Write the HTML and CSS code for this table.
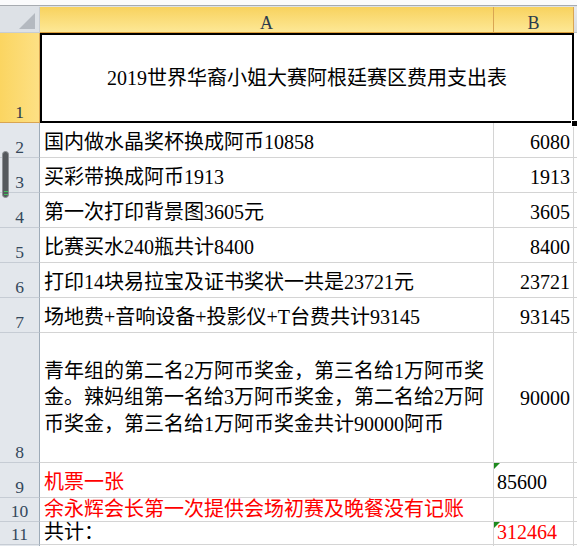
FILE: index.html
```html
<!DOCTYPE html>
<html lang="zh">
<head>
<meta charset="utf-8">
<title>2019世界华裔小姐大赛阿根廷赛区费用支出表</title>
<link rel="stylesheet" href="styles.css">
</head>
<body>
<div class="topstrip"></div>
<div class="sheet">
  <div class="corner"><span class="corner-tri"></span></div>
  <div class="colhdr sel">A</div>
  <div class="colhdr sel">B</div>
  <div class="colhdr plain"></div>

  <div class="rowhdr sel">1</div>
  <div class="cell merged"><span>2019世界华裔小姐大赛阿根廷赛区费用支出表</span><span class="handle"></span></div>
  <div class="cell rest"></div>

  <div class="rowhdr">2</div>
  <div class="cell">国内做水晶奖杯换成阿币10858</div>
  <div class="cell num">6080</div>
  <div class="cell rest"></div>

  <div class="rowhdr">3</div>
  <div class="cell">买彩带换成阿币1913</div>
  <div class="cell num">1913</div>
  <div class="cell rest"></div>

  <div class="rowhdr">4</div>
  <div class="cell">第一次打印背景图3605元</div>
  <div class="cell num">3605</div>
  <div class="cell rest"></div>

  <div class="rowhdr">5</div>
  <div class="cell">比赛买水240瓶共计8400</div>
  <div class="cell num">8400</div>
  <div class="cell rest"></div>

  <div class="rowhdr">6</div>
  <div class="cell">打印14块易拉宝及证书奖状一共是23721元</div>
  <div class="cell num">23721</div>
  <div class="cell rest"></div>

  <div class="rowhdr">7</div>
  <div class="cell">场地费+音响设备+投影仪+T台费共计93145</div>
  <div class="cell num">93145</div>
  <div class="cell rest"></div>

  <div class="rowhdr">8</div>
  <div class="cell wrap">青年组的第二名2万阿币奖金，第三名给1万阿币奖<br>金。辣妈组第一名给3万阿币奖金，第二名给2万阿<br>币奖金，第三名给1万阿币奖金共计90000阿币</div>
  <div class="cell num mid">90000</div>
  <div class="cell rest"></div>

  <div class="rowhdr">9</div>
  <div class="cell red">机票一张</div>
  <div class="cell txt"><span class="tri"></span>85600</div>
  <div class="cell rest"></div>

  <div class="rowhdr">10</div>
  <div class="cell red tight">余永辉会长第一次提供会场初赛及晚餐没有记账</div>
  <div class="cell tight"></div>
  <div class="cell rest"></div>

  <div class="rowhdr">11</div>
  <div class="cell tight">共计：</div>
  <div class="cell txt red tight"><span class="tri"></span>312464</div>
  <div class="cell rest"></div>

  <div class="rowhdr"></div>
  <div class="cell"></div>
  <div class="cell"></div>
  <div class="cell rest"></div>
</div>
<div class="scrollmark"><span class="grip"></span><span class="grip"></span></div>
</body>
</html>
```

FILE: styles.css
```css
html, body {
  margin: 0;
  padding: 0;
  background: #ffffff;
  overflow: hidden;
  height: 546px;
}

body {
  position: relative;
  font-family: "Liberation Serif", "Noto Sans CJK SC", serif;
  color: #000;
}

.topstrip {
  height: 7px;
  background: linear-gradient(#fbfbfc 0 5px, #a7abb0 5px 6px, #dfe2e6 6px 7px);
}

.sheet {
  display: grid;
  grid-template-columns: 40px 454px 80px 1fr;
  grid-template-rows: 26px 90px repeat(6, 35px) 130px 35px 24px 23px 1fr;
  height: 539px;
  overflow: hidden;
}

.sheet > div {
  box-sizing: border-box;
  min-width: 0;
}

.corner {
  position: relative;
  background: #dde1e6;
  border-right: 1px solid #c8cdd3;
  border-bottom: 1px solid #c8cdd3;
}

.corner-tri {
  position: absolute;
  right: 4px;
  bottom: 3px;
  width: 0;
  height: 0;
  border-left: 16px solid transparent;
  border-bottom: 16px solid #b4b9c0;
}

.colhdr {
  display: flex;
  align-items: flex-end;
  justify-content: center;
  font-size: 18px;
  line-height: 18px;
  color: #2b3b4c;
  border-right: 1px solid #d9a552;
  border-bottom: 1px solid #dc9f3a;
}

.colhdr.sel {
  background: linear-gradient(#f8d25e, #fde896);
}

.colhdr.plain {
  background: linear-gradient(#e6e9ed, #d9dde2);
  border-right: none;
  border-bottom: 1px solid #b9c0c8;
}

.rowhdr {
  display: flex;
  align-items: flex-end;
  justify-content: center;
  font-size: 17.5px;
  line-height: 20px;
  color: #34475b;
  background: #e3e7ec;
  border-right: 1px solid #9eabb8;
  border-bottom: 1px solid #c6ccd4;
}

.rowhdr.sel {
  background: linear-gradient(90deg, #fbd561, #fde084);
  border-right: 1px solid #d9a552;
  border-bottom: 1px solid #d9a552;
  color: #2b3b4c;
}

.cell {
  display: flex;
  align-items: flex-end;
  font-size: 20px;
  line-height: 24px;
  padding: 0 3px 3px 4px;
  white-space: nowrap;
  border-right: 1px solid #d4d4d4;
  border-bottom: 1px solid #d4d4d4;
  position: relative;
}

.cell.rest {
  border-right: none;
  padding: 0;
}

.cell.num {
  justify-content: flex-end;
}

.cell.mid {
  align-items: center;
  padding-bottom: 0;
}

.cell.txt {
  padding-left: 3px;
}

.cell.tight {
  padding-bottom: 0;
}

.cell.red {
  color: #ff0000;
}

.cell.wrap {
  align-items: center;
  line-height: 26.5px;
  padding-bottom: 0;
}

.cell.merged {
  grid-column: 2 / 4;
  justify-content: center;
  align-items: center;
  padding: 0;
  border: none;
  box-shadow: inset 0 0 0 2px #000;
  overflow: visible;
  z-index: 2;
}

.handle {
  position: absolute;
  right: -3px;
  bottom: -3px;
  width: 5px;
  height: 5px;
  background: #000;
  border: 1px solid #fff;
  box-sizing: content-box;
  margin: -1px;
}

.tri {
  position: absolute;
  left: 0;
  top: 0;
  width: 0;
  height: 0;
  border-top: 6px solid #1e8a1e;
  border-right: 6px solid transparent;
}

.scrollmark {
  position: absolute;
  left: 2px;
  top: 151px;
  width: 7px;
  height: 47px;
  box-sizing: border-box;
  border-radius: 4px;
  background: #55595d;
  border: 1px solid #8d9094;
  display: flex;
  flex-direction: column;
  justify-content: flex-end;
  align-items: center;
  gap: 2px;
  padding-bottom: 2px;
}

.grip {
  display: block;
  width: 4px;
  height: 1px;
  background: #3ec35c;
}
```
